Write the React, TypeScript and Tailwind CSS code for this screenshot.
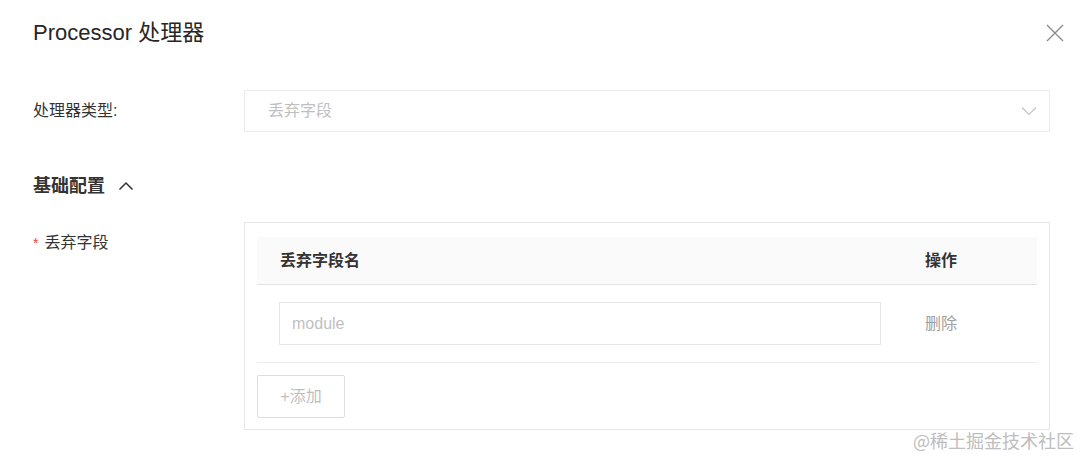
import React from "react";

const font = { fontFamily: '"Helvetica Neue", "Liberation Sans", "Noto Sans CJK SC", sans-serif' };

export default function App() {
  return (
    <div
      className="relative w-[1080px] h-[457px] bg-white text-[#333] overflow-hidden"
      style={font}
    >
      {/* header */}
      <div className="flex items-center justify-between pl-[33px] pr-[14px] h-[66px]">
        <div className="text-[22px] leading-none text-[#262626]">Processor 处理器</div>
        <svg width="22" height="22" viewBox="0 0 22 22" className="text-[#8c8c8c]">
          <path d="M3 3 L19 19 M19 3 L3 19" stroke="currentColor" strokeWidth="1.4" fill="none" />
        </svg>
      </div>

      {/* processor type row */}
      <div className="flex items-center mt-[24px] pl-[33px] pr-[30px]">
        <div className="w-[211px] text-[16px] text-[#333]">处理器类型:</div>
        <div className="flex-1 h-[42px] border border-[#ececec] flex items-center justify-between pl-[23px] pr-[12px]">
          <span className="text-[16px] text-[#bfbfbf]">丢弃字段</span>
          <svg width="16" height="10" viewBox="0 0 16 10" className="text-[#c4c4c4]">
            <path d="M1 1.5 L8 8.5 L15 1.5" stroke="currentColor" strokeWidth="1.2" fill="none" />
          </svg>
        </div>
      </div>

      {/* section title */}
      <div className="flex items-center gap-[13px] pl-[33px] mt-[40px] h-[28px]">
        <span className="text-[18px] font-bold text-[#333]">基础配置</span>
        <svg width="16" height="10" viewBox="0 0 16 10" className="text-[#333]">
          <path d="M1.5 8.5 L8 2 L14.5 8.5" stroke="currentColor" strokeWidth="1.5" fill="none" />
        </svg>
      </div>

      {/* discard fields row */}
      <div className="flex pl-[33px] pr-[30px] mt-[22px]">
        <div className="w-[211px] pt-[10px] flex items-start text-[16px] leading-[22px]">
          <span className="text-[#e04a3f] mr-[6px] text-[14px]">*</span>
          <span>丢弃字段</span>
        </div>
        <div className="flex-1 border border-[#e6e6e6] pt-[14px] px-[12px] pb-[11px] flex flex-col">
          <div className="flex h-[48px] bg-[#fafafa] border-b border-[#e3e3e3] items-center text-[16px] font-bold text-[#333]">
            <div className="w-[644px] pl-[23px]">丢弃字段名</div>
            <div className="flex-1 pl-[24px]">操作</div>
          </div>
          <div className="flex h-[78px] border-b border-[#ececec] items-center">
            <div className="w-[644px] pl-[22px] pr-[20px]">
              <div className="h-[43px] border border-[#e6e6e6] flex items-center pl-[12px] text-[16px] text-[#bfbfbf]">
                module
              </div>
            </div>
            <div className="flex-1 pl-[24px] text-[16px] text-[#9e9e9e]">删除</div>
          </div>
          <div className="mt-[12px] w-[88px] h-[43px] border border-[#dedede] rounded-[2px] flex items-center justify-center text-[16px] text-[#bfbfbf]">
            +添加
          </div>
        </div>
      </div>

      {/* watermark */}
      <div
        className="absolute left-[913px] top-[427px] text-[18px] text-[#bdbdbd]"
        style={{ fontFamily: '"Noto Sans CJK SC", sans-serif' }}
      >
        @稀土掘金技术社区
      </div>
    </div>
  );
}
